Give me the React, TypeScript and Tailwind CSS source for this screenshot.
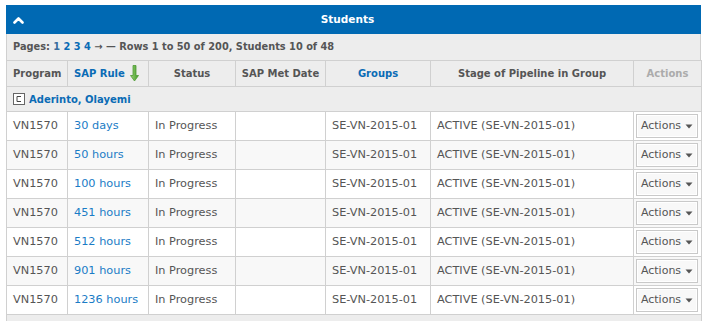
import React from "react";

const rows = [
  "30 days",
  "50 hours",
  "100 hours",
  "451 hours",
  "512 hours",
  "901 hours",
  "1236 hours",
];

function Chevron() {
  return (
    <svg width="11" height="8" viewBox="0 0 11 8" className="block">
      <path d="M1.5 6.5 L5.5 2.5 L9.5 6.5" fill="none" stroke="#fff" strokeWidth="2.6" strokeLinecap="round" strokeLinejoin="round" />
    </svg>
  );
}

function GreenArrow() {
  return (
    <svg width="9" height="17" viewBox="0 0 9 17" className="inline-block align-middle">
      <defs>
        <linearGradient id="ga" x1="0" x2="1" y1="0" y2="0">
          <stop offset="0" stopColor="#9fd37a" />
          <stop offset="1" stopColor="#3f9a25" />
        </linearGradient>
      </defs>
      <path d="M3 0.5 H6 V10.5 H8.5 L4.5 16 L0.5 10.5 H3 Z" fill="url(#ga)" stroke="#4e9a35" strokeWidth="0.8" strokeLinejoin="round" />
    </svg>
  );
}

function BoxIcon() {
  return (
    <svg width="12" height="12" viewBox="0 0 12 12" className="block">
      <rect x="0.5" y="0.5" width="11" height="11" fill="#fff" stroke="#666" />
      <path d="M8 3.5 H4 V8.5 H8" fill="none" stroke="#444" strokeWidth="1" />
    </svg>
  );
}

function ActionsButton() {
  return (
    <div className="flex h-[24px] w-[62px] items-center justify-center gap-[4px] border border-[#c9c9c9] bg-[#f8f8f8] shadow-[inset_0_0_0_1px_#ffffff] text-[11px] text-[#555]">
      <span>Actions</span>
      <svg width="8" height="5" viewBox="0 0 8 5" className="block">
        <path d="M0.5 0.5 H7.5 L4 4.5 Z" fill="#555" />
      </svg>
    </div>
  );
}

export default function App() {
  return (
    <div className="w-[705px] h-[321px] overflow-hidden bg-white pt-[5px] pl-[6px]" style={{ fontFamily: '"DejaVu Sans", Verdana, sans-serif' }}>
      <div className="w-[695px]">
        <div className="relative flex h-[29px] items-center bg-[#0069b3]">
          <div className="absolute left-[7px] top-[11px]">
            <Chevron />
          </div>
          <div className="w-full pr-[12px] text-center text-[10.5px] font-bold text-white">Students</div>
        </div>
        <div className="flex h-[26px] items-center border-x border-[#d0d0d0] bg-[#ededed] pl-[6px] text-[9.8px] font-bold text-[#555]">
          <span>Pages:&nbsp;</span>
          <span className="text-[#3a6d9c]">1</span>
          <span>&nbsp;</span>
          <span className="text-[#0a6bb5]">2</span>
          <span>&nbsp;</span>
          <span className="text-[#0a6bb5]">3</span>
          <span>&nbsp;</span>
          <span className="text-[#0a6bb5]">4</span>
          <span>&nbsp;→ — Rows 1 to 50 of 200, Students 10 of 48</span>
        </div>
        <table className="w-[695px] table-fixed border-collapse">
          <colgroup>
            <col className="w-[61px]" />
            <col className="w-[81px]" />
            <col className="w-[87px]" />
            <col className="w-[90px]" />
            <col className="w-[105px]" />
            <col className="w-[203px]" />
            <col className="w-[68px]" />
          </colgroup>
          <thead>
            <tr className="h-[26px] bg-[#ededed] text-[10px] font-bold text-[#555]">
              <th className="border border-[#d0d0d0] pl-[6px] text-left font-bold">Program</th>
              <th className="border border-[#d0d0d0] pl-[6px] text-left font-bold text-[#0a6bb5]">
                <span className="align-middle">SAP Rule</span>
                <span className="ml-[5px]"><GreenArrow /></span>
              </th>
              <th className="border border-[#d0d0d0] text-center font-bold">Status</th>
              <th className="border border-[#d0d0d0] text-center font-bold">SAP Met Date</th>
              <th className="border border-[#d0d0d0] text-center font-bold text-[#0a6bb5]">Groups</th>
              <th className="border border-[#d0d0d0] text-center font-bold">Stage of Pipeline in Group</th>
              <th className="border border-[#d0d0d0] text-center font-bold text-[#ababab]">Actions</th>
            </tr>
          </thead>
          <tbody>
            <tr className="h-[25px] bg-[#ededed]">
              <td colSpan={7} className="border border-[#d0d0d0] pl-[6px]">
                <div className="flex items-center gap-[4px]">
                  <BoxIcon />
                  <span className="text-[10px] font-bold text-[#0a6bb5]">Aderinto, Olayemi</span>
                </div>
              </td>
            </tr>
            {rows.map((r, i) => (
              <tr key={r} className={`h-[29px] text-[11.3px] text-[#555] ${i % 2 === 1 ? "bg-[#f8f8f8]" : "bg-white"}`}>
                <td className="border border-[#d0d0d0] pl-[6px]">VN1570</td>
                <td className="border border-[#d0d0d0] pl-[6px] text-[#1a7cc6]">{r}</td>
                <td className="border border-[#d0d0d0] pl-[6px]">In Progress</td>
                <td className="border border-[#d0d0d0]"></td>
                <td className="border border-[#d0d0d0] pl-[6px]">SE-VN-2015-01</td>
                <td className="border border-[#d0d0d0] pl-[6px]">ACTIVE (SE-VN-2015-01)</td>
                <td className="border border-[#d0d0d0] pl-[2px]">
                  <ActionsButton />
                </td>
              </tr>
            ))}
            <tr className="h-[26px] bg-[#ededed]">
              <td colSpan={7} className="border border-[#d0d0d0]"></td>
            </tr>
          </tbody>
        </table>
      </div>
    </div>
  );
}
